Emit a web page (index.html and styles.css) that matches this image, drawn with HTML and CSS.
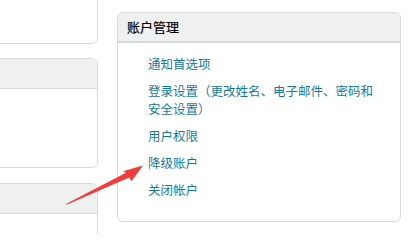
FILE: index.html
```html
<!DOCTYPE html>
<html lang="zh">
<head>
<meta charset="utf-8">
<link rel="stylesheet" href="styles.css">
</head>
<body>
<div class="page">
  <div class="left">
    <div class="card card-top"></div>
    <div class="card card-mid">
      <div class="card-head"></div>
    </div>
    <div class="card card-low">
      <div class="card-head"></div>
    </div>
  </div>
  <div class="right">
    <div class="panel">
      <div class="panel-head">账户管理</div>
      <ul class="links">
        <li><a href="#">通知首选项</a></li>
        <li><a href="#">登录设置（更改姓名、电子邮件、密码和安全设置）</a></li>
        <li><a href="#">用户权限</a></li>
        <li><a href="#">降级账户</a></li>
        <li><a href="#">关闭帐户</a></li>
      </ul>
    </div>
  </div>
  <svg class="arrow" width="415" height="234" viewBox="0 0 415 234">
    <polygon points="66,204 126,172.8 123,171.3 143,165.5 131.5,181.2 129.2,177.6 67.2,204.6" fill="#f23b3b"/>
  </svg>
</div>
</body>
</html>
```
FILE: styles.css
```css
html, body {
  margin: 0;
  padding: 0;
  background: #ffffff;
}
body {
  font-family: "Noto Sans CJK SC", "Noto Sans", sans-serif;
  width: 415px;
  height: 234px;
  overflow: hidden;
}
.page {
  position: relative;
  display: grid;
  grid-template-columns: 98px 284px;
  column-gap: 19px;
  width: 415px;
  height: 234px;
  overflow: hidden;
}
.left {
  display: flex;
  flex-direction: column;
  margin-left: -20px;
  margin-top: -20px;
}
.card {
  box-sizing: border-box;
  border: 1px solid #d9dada;
  border-radius: 6px;
  background: #fff;
  overflow: hidden;
}
.card-top {
  height: 64px;
}
.card-mid {
  margin-top: 14px;
  height: 110px;
}
.card-low {
  margin-top: 15px;
  height: 80px;
}
.card-head {
  height: 29px;
  background: #eff0f0;
  border-bottom: 1px solid #d9dada;
}
.right {
  padding-top: 12px;
}
.panel {
  box-sizing: border-box;
  border: 1px solid #d9dada;
  border-radius: 6px;
  overflow: hidden;
  height: 210px;
}
.panel-head {
  height: 28px;
  background: #eff0f0;
  border-bottom: 2px solid #d6d7d7;
  padding-left: 9px;
  font-size: 13px;
  line-height: 28px;
  color: #000;
  -webkit-text-stroke: 0.2px #000;
}
.links {
  list-style: none;
  margin: 0;
  padding: 12px 20px 0 30px;
}
.links li {
  font-size: 12.5px;
  line-height: 18px;
  margin-bottom: 9px;
}
.links a {
  color: #17799a;
  text-decoration: none;
}
.arrow {
  position: absolute;
  left: 0;
  top: 0;
}
```
